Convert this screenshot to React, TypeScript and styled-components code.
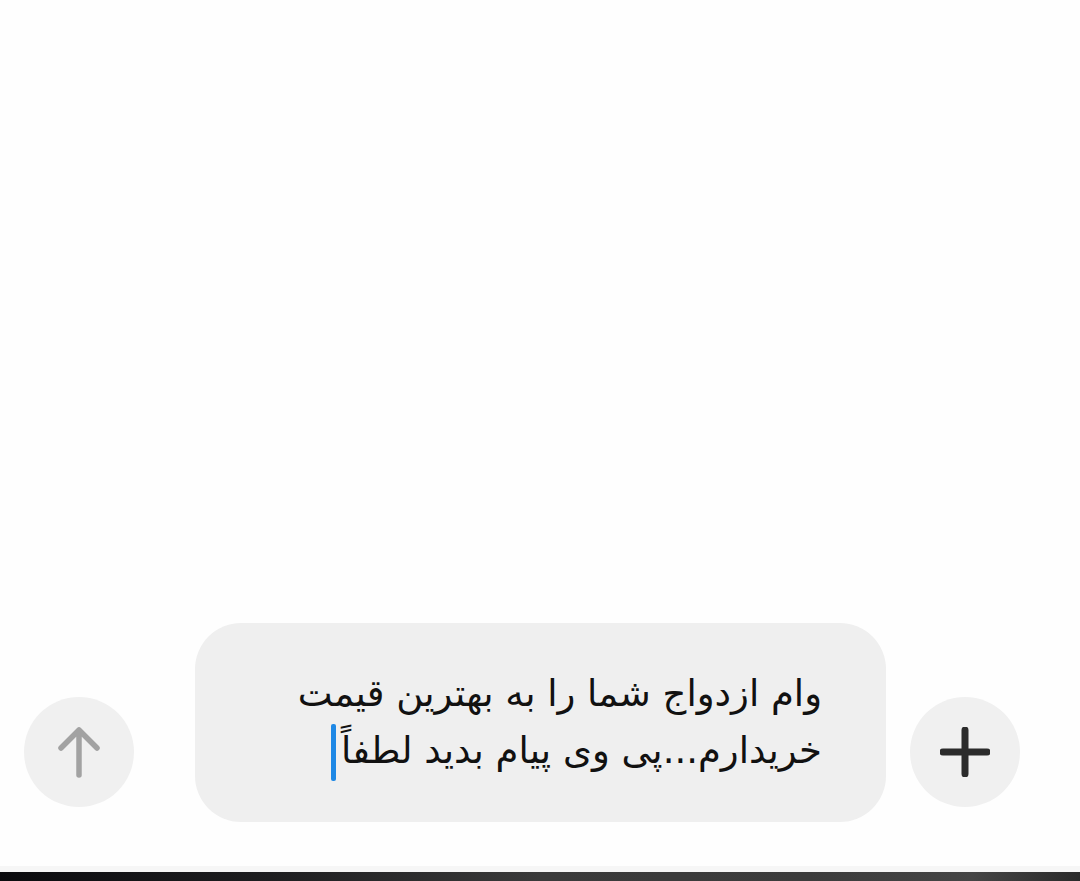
import React from "react";
import styled, { createGlobalStyle } from "styled-components";

const GlobalStyle = createGlobalStyle`
    html, body {
        margin: 0;
        padding: 0;
        background: #fefefe;
    }
    body {
        font-family: "DejaVu Sans", "Noto Sans", sans-serif;
    }
`;

const Screen = styled.div`
    height: 881px;
    width: 1080px;
    display: flex;
    flex-direction: column;
    background: #fefefe;
    overflow: hidden;
`;

const Feed = styled.div`
    flex: 1;
`;

const Composer = styled.div`
    display: flex;
    align-items: flex-end;
    padding: 0 0 44px 24px;
`;

interface RoundButtonProps {
    $tone: string;
}

const RoundButton = styled.button<RoundButtonProps>`
    width: 110px;
    height: 110px;
    border-radius: 50%;
    border: none;
    background: #f0f0f0;
    color: ${(p) => p.$tone};
    display: flex;
    align-items: center;
    justify-content: center;
    margin-bottom: 15px;
    padding: 0;
    flex-shrink: 0;
`;

const Bubble = styled.div`
    width: 691px;
    height: 199px;
    box-sizing: border-box;
    margin: 0 24px 0 61px;
    background: #efefef;
    border-radius: 46px;
    display: flex;
    align-items: center;
    justify-content: flex-end;
    padding: 0 64px 0 40px;
`;

const MessageText = styled.div`
    direction: rtl;
    font-family: "DejaVu Sans", sans-serif;
    font-size: 37px;
    line-height: 57px;
    color: #111;
    text-align: right;
`;

const Caret = styled.span`
    display: inline-block;
    width: 5px;
    height: 57px;
    background: #1e88e5;
    border-radius: 2px;
    vertical-align: middle;
    margin-right: 5px;
`;

const Divider = styled.div`
    height: 6px;
    background: #f6f6f6;
`;

const BottomBar = styled.div`
    height: 9px;
    background: linear-gradient(90deg, #0b0b0e 0%, #1e1e20 25%, #3a3a3a 50%, #3c3c3c 75%, #454545 90%, #2a2a2a 100%);
`;

const ArrowUp = () => (
    <svg width="46" height="54" viewBox="0 0 46 54" fill="none">
        <path
            d="M23 50V5M5 23L23 5L41 23"
            stroke="currentColor"
            strokeWidth="5.5"
            strokeLinecap="round"
            strokeLinejoin="round"
        />
    </svg>
);

const Plus = () => (
    <svg width="50" height="50" viewBox="0 0 50 50" fill="none">
        <path d="M25 3V47M3 25H47" stroke="currentColor" strokeWidth="7" strokeLinecap="round" />
    </svg>
);

const App: React.FC = () => {
    return (
        <Screen>
            <GlobalStyle />
            <Feed />
            <Composer>
                <RoundButton $tone="#a2a2a2">
                    <ArrowUp />
                </RoundButton>
                <Bubble>
                    <MessageText>
                        وام ازدواج شما را به بهترین قیمت
                        <br />
                        خریدارم...پی وی پیام بدید لطفاً
                        <Caret />
                    </MessageText>
                </Bubble>
                <RoundButton $tone="#2b2b2b">
                    <Plus />
                </RoundButton>
            </Composer>
            <Divider />
            <BottomBar />
        </Screen>
    );
};

export default App;
